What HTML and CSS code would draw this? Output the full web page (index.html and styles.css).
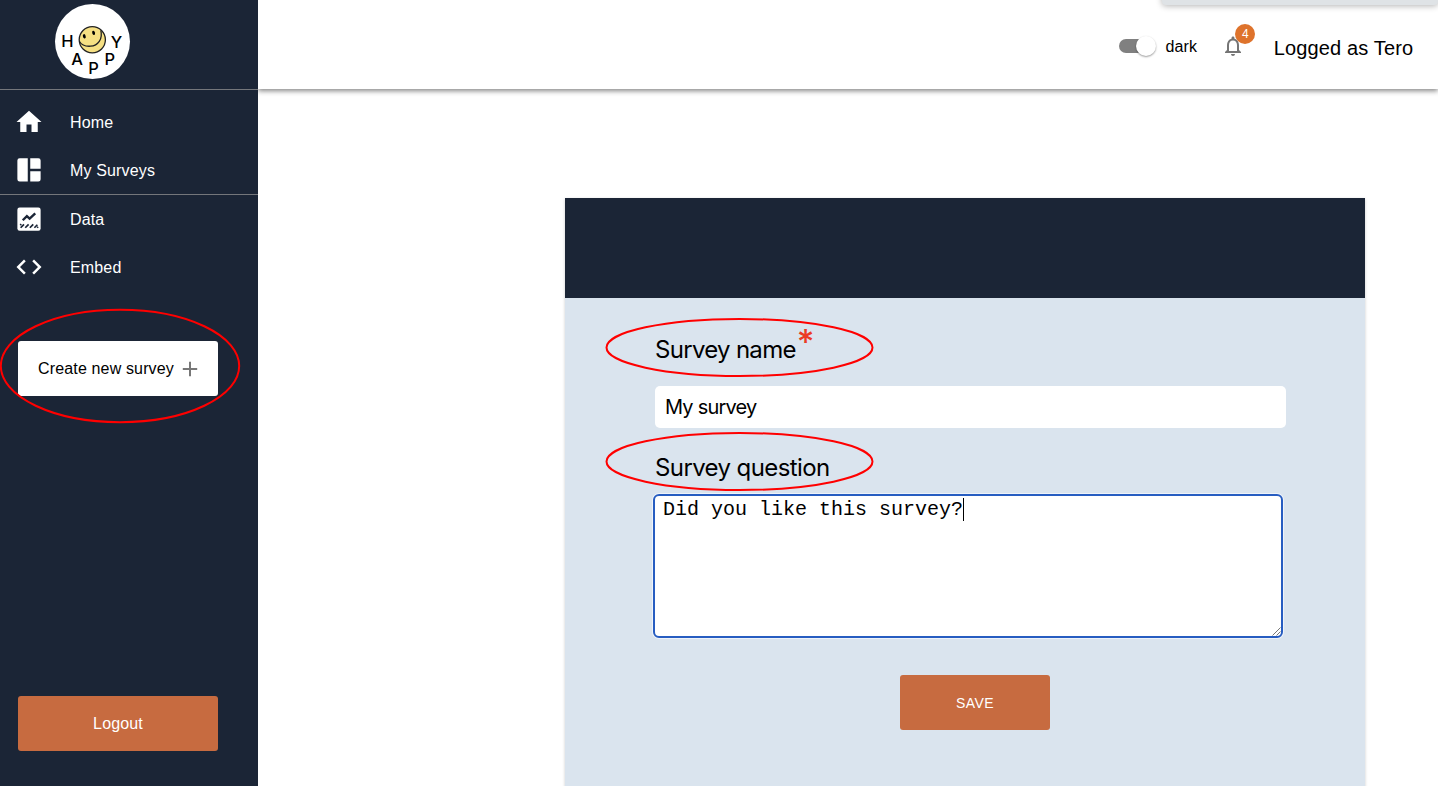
FILE: index.html
```html
<!DOCTYPE html>
<html lang="en">
<head>
<meta charset="utf-8">
<title>Happy – New survey</title>
<link rel="stylesheet" href="styles.css">
</head>
<body>
<div class="app">
  <aside class="sidebar">
    <div class="brand">
      <svg class="logo" viewBox="0 0 77 77" width="77" height="77">
        <circle cx="38.500" cy="38.500" r="37.500" fill="#fff"/>
        <g fill="none" stroke="#222" stroke-width="1.300">
          <circle cx="38.300" cy="36.700" r="13.100" fill="#f6e083"/>
          <path d="M25.500 38.500C27.500 42 32 43.500 36.500 43.200C44 42.700 49 36 46.800 27.300"/>
        </g>
        <ellipse cx="30.300" cy="33.300" rx="1.400" ry="2.200" transform="rotate(-15 30.300 33.300)"/>
        <ellipse cx="39.600" cy="29.900" rx="1.400" ry="2.200" transform="rotate(-15 39.600 29.900)"/>
        <g class="logo-text" text-anchor="middle">
          <text x="13.300" y="44">H</text>
          <text x="62.500" y="44.500">Y</text>
          <text x="23" y="62">A</text>
          <text x="39.500" y="70.600">P</text>
          <text x="55.700" y="61.600">P</text>
        </g>
      </svg>
    </div>
    <nav class="nav">
      <a class="nav-item"><svg class="icon" viewBox="0 0 24 24"><path d="M10 20v-6h4v6h5v-8h3L12 3 2 12h3v8z"/></svg><span>Home</span></a>
      <a class="nav-item"><svg class="icon" viewBox="0 0 24 24"><path d="M11 21.200H4.500a1.800 1.800 0 0 1-1.800-1.800v-15a1.800 1.800 0 0 1 1.800-1.800H11zM13 21.200h6.500a1.800 1.800 0 0 0 1.800-1.800V13H13zM21.300 11V4.400a1.800 1.800 0 0 0-1.800-1.800H13V11z"/></svg><span>My Surveys</span></a>
    </nav>
    <nav class="nav nav-tools">
      <a class="nav-item"><svg class="icon" viewBox="0 0 24 24"><rect x="2.700" y="2.800" width="18.600" height="18.500" rx="1.800"/><g fill="none" stroke="#1b2536"><path stroke-width="1.900" d="M7 13l3.300-3.300 2.200 2L17 7.500"/><path stroke-width="1.400" d="M5.300 19l2.700-2.700M9 19l2.700-2.700M12.700 19l2.700-2.700M16.300 19l2.400-2.400M5 16.900l.8-.8M18.500 19l.8-.8"/></g></svg><span>Data</span></a>
      <a class="nav-item"><svg class="icon" viewBox="0 0 24 24"><path d="M9.400 16.600L4.800 12l4.600-4.600L8 6l-6 6 6 6 1.400-1.400zm5.200 0l4.600-4.600-4.600-4.600L16 6l6 6-6 6-1.400-1.400z"/></svg><span>Embed</span></a>
    </nav>
    <button class="btn create">Create new survey<svg width="16" height="16" viewBox="0 0 16 16"><path d="M8 .8v14.400M.8 8h14.400" stroke="#777" stroke-width="2"/></svg></button>
    <button class="btn logout">Logout</button>
  </aside>
  <div class="page">
    <header class="topbar">
      <span class="switch"><span class="thumb"></span></span>
      <span class="mode">dark</span>
      <span class="bell">
        <svg width="24" height="24" viewBox="0 0 24 24" fill="#757575"><path d="M12 22c1.100 0 2-.9 2-2h-4c0 1.100.9 2 2 2zm6-6v-5c0-3.070-1.630-5.640-4.500-6.320V4c0-.83-.67-1.500-1.500-1.500s-1.500.67-1.500 1.500v.68C7.640 5.360 6 7.920 6 11v5l-2 2v1h16v-1l-2-2zm-2 1H8v-6c0-2.480 1.510-4.500 4-4.500s4 2.020 4 4.500v6z"/></svg>
        <span class="badge">4</span>
      </span>
      <span class="user">Logged as Tero</span>
      <div class="popup-edge"></div>
    </header>
    <main class="content">
      <section class="card">
        <div class="card-head"></div>
        <form class="form">
          <label class="label">Survey name<span class="required">*</span></label>
          <div class="input">My survey</div>
          <label class="label label-question">Survey question</label>
          <div class="textarea"><span class="typed">Did you like this survey?</span><svg class="grip" width="9" height="9" viewBox="0 0 9 9"><path d="M.5 8.500l8-8M4.500 8.500l4-4" stroke="#777" fill="none"/></svg></div>
          <button class="btn save" type="button">SAVE</button>
        </form>
      </section>
    </main>
  </div>
</div>
<svg class="marks" width="1438" height="786" viewBox="0 0 1438 786">
  <ellipse cx="120" cy="366" rx="119.200" ry="56.200"/>
  <ellipse cx="739.500" cy="347.500" rx="133" ry="28.500"/>
  <ellipse cx="739.500" cy="461.500" rx="133" ry="28.500"/>
</svg>
</body>
</html>
```

FILE: styles.css
```css
* { box-sizing: border-box; }
body { margin: 0; font-family: "Liberation Sans", Arial, sans-serif; color: #000; background: #fff; overflow: hidden; }
.app { display: flex; width: 1438px; height: 786px; }
.sidebar { width: 258px; flex: none; display: flex; flex-direction: column; background: #1b2536; }
.brand { height: 90px; padding: 3px 0 0 54px; border-bottom: 1px solid #74767b; }
.logo { display: block; }
.logo-text { font: 500 16.5px Inter, sans-serif; }
.nav { padding-top: 8px; border-bottom: 1px solid #74767b; }
.nav-tools { padding-top: 0; border: 0; }
.nav-item { display: flex; align-items: center; gap: 26px; height: 48px; padding-left: 14px; color: #fff; font-size: 16px; letter-spacing: .15px; }
.nav-item span { padding-top: 1px; }
.icon { width: 30px; height: 30px; fill: #fff; }
.btn { display: flex; align-items: center; justify-content: center; width: 200px; height: 55px; padding: 0; border: 0; border-radius: 3px; background: #c76b40; color: #fff; font: 16px "Liberation Sans", Arial, sans-serif; }
.create { margin: 50px 0 0 18px; gap: 8px; background: #fff; color: #000; letter-spacing: .15px; }
.logout { margin: auto 0 35px 18px; letter-spacing: .15px; }
.page { flex: 1; display: flex; flex-direction: column; }
.topbar { position: relative; flex: none; height: 89px; display: flex; padding-left: 861.4px; box-shadow: 0 2px 5px rgba(0,0,0,.48); clip-path: inset(0 0 -10px 0); }
.switch { width: 37px; height: 14px; margin-top: 39px; border-radius: 7px; background: linear-gradient(90deg, #808080 30px, transparent 30px); }
.thumb { display: block; width: 20px; height: 20px; margin: -3px 0 0 17px; border-radius: 50%; background: #fff; box-shadow: 0 1px 2px rgba(0,0,0,.4); }
.mode { margin: 37px 0 0 9px; font-size: 16px; line-height: 19px; letter-spacing: .15px; width: 33px; }
.bell { position: relative; width: 24px; height: 24px; margin: 34px 0 0 23px; }
.badge { position: absolute; left: 14px; top: -10px; width: 20px; height: 20px; border-radius: 50%; background: #de732c; color: #fff; font-size: 12px; line-height: 20px; text-align: center; }
.user { margin: 36px 0 0 28.3px; font-size: 20px; line-height: 24px; letter-spacing: .15px; white-space: nowrap; }
.popup-edge { position: absolute; left: 904px; top: -10px; width: 276px; height: 15px; border-radius: 4px; background: #dfe3e6; box-shadow: 0 1px 6px rgba(0,0,0,.3); }
.content { padding: 109px 0 0 307px; }
.card { width: 800px; height: 600px; background: #dae4ee; box-shadow: 0 1px 3px rgba(0,0,0,.2); }
.card-head { height: 100px; background: #1b2536; }
.form { padding: 34px 79px 0 90px; display: flex; flex-direction: column; }
.label { height: 36px; font-family: Inter, sans-serif; font-size: 24px; line-height: 36px; white-space: nowrap; letter-spacing: -.7px; }
.required { position: relative; top: -4px; margin-left: 1px; color: #eb3b25; font: 500 34px Inter, sans-serif; line-height: 0; }
.input { height: 42px; margin-top: 18px; padding-left: 10px; border-radius: 5px; background: #fff; font: 20px/42px Inter, sans-serif; letter-spacing: -.8px; }
.label-question { margin-top: 22px; letter-spacing: -.6px; }
.textarea { position: relative; width: 630px; height: 144px; margin: 8px 0 0 -2px; padding: 2px 8px; border: 2px solid #275dc1; border-radius: 6px; background: #fff; box-shadow: 0 0 0 1px #eef3fa; }
.typed { display: inline-block; height: 23px; border-right: 1px solid #000; font: 20px/23px "Liberation Mono", monospace; }
.grip { position: absolute; right: 0; bottom: 0; }
.save { width: 150px; margin: 37px 0 0 245px; font-size: 14px; letter-spacing: .4px; }
.marks { position: absolute; left: 0; top: 0; fill: none; stroke: #f00; stroke-width: 2; pointer-events: none; }
```
